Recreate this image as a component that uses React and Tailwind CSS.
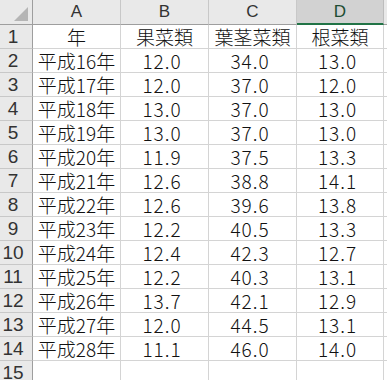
const rows = [
  ["年", "果菜類", "葉茎菜類", "根菜類"],
  ["平成16年", "12.0", "34.0", "13.0"],
  ["平成17年", "12.0", "37.0", "12.0"],
  ["平成18年", "13.0", "37.0", "13.0"],
  ["平成19年", "13.0", "37.0", "13.0"],
  ["平成20年", "11.9", "37.5", "13.3"],
  ["平成21年", "12.6", "38.8", "14.1"],
  ["平成22年", "12.6", "39.6", "13.8"],
  ["平成23年", "12.2", "40.5", "13.3"],
  ["平成24年", "12.4", "42.3", "12.7"],
  ["平成25年", "12.2", "40.3", "13.1"],
  ["平成26年", "13.7", "42.1", "12.9"],
  ["平成27年", "12.0", "44.5", "13.1"],
  ["平成28年", "11.1", "46.0", "14.0"],
  ["", "", "", ""],
];

const cellFont = { fontFamily: '"Noto Sans CJK JP", "Noto Sans", sans-serif' };
const headFont = { fontFamily: '"Liberation Sans", Arial, sans-serif' };

function ColHead({ label, active }) {
  if (active) {
    return (
      <div
        className="h-[25px] flex items-center justify-center bg-[#d2d2d2] border-r border-[#bdbdbd] border-b-2 border-b-[#217346] text-[17px] leading-[20px] text-[#1f4d33]"
        style={headFont}
      >
        {label}
      </div>
    );
  }
  return (
    <div
      className="h-[25px] flex items-center justify-center bg-[#e9e9e9] border-r border-b border-r-[#c8c8c8] border-b-[#9e9e9e] text-[17px] leading-[20px] text-[#333]"
      style={headFont}
    >
      {label}
    </div>
  );
}

export default function App() {
  return (
    <div className="w-[387px] h-[380px] overflow-hidden bg-white">
      <div className="grid grid-cols-[33px_88px_88px_88px_87px_1fr]">
        {/* corner */}
        <div className="h-[25px] bg-[#e9e9e9] border-r border-b border-[#9e9e9e] flex items-end justify-end pr-[3px] pb-[2px]">
          <svg width="15" height="15" viewBox="0 0 15 15">
            <polygon points="14,0 14,14 0,14" fill="#b5b5b5" />
          </svg>
        </div>
        <ColHead label="A" />
        <ColHead label="B" />
        <ColHead label="C" />
        <ColHead label="D" active />
        <div className="h-[25px] bg-[#e9e9e9] border-b border-[#9e9e9e]" />

        {rows.map((r, i) => (
          <div key={i} className="contents">
            <div
              className="h-[24px] bg-[#e9e9e9] border-r border-r-[#9e9e9e] border-b border-b-[#c8c8c8] flex items-center justify-center pr-[6px] text-[19px] leading-[20px] text-[#333]"
              style={headFont}
            >
              {i + 1}
            </div>
            {r.map((v, j) => (
              <div
                key={j}
                className={
                  "h-[24px] border-r border-b border-[#d4d4d4] flex items-center justify-center text-[19px] leading-[20px] font-light text-[#111] " +
                  (j === 0 || i === 0 ? "" : "pr-[5px] tracking-[1px]")
                }
                style={cellFont}
              >
                {v}
              </div>
            ))}
            <div className="h-[24px] border-b border-[#d4d4d4]" />
          </div>
        ))}
      </div>
    </div>
  );
}
